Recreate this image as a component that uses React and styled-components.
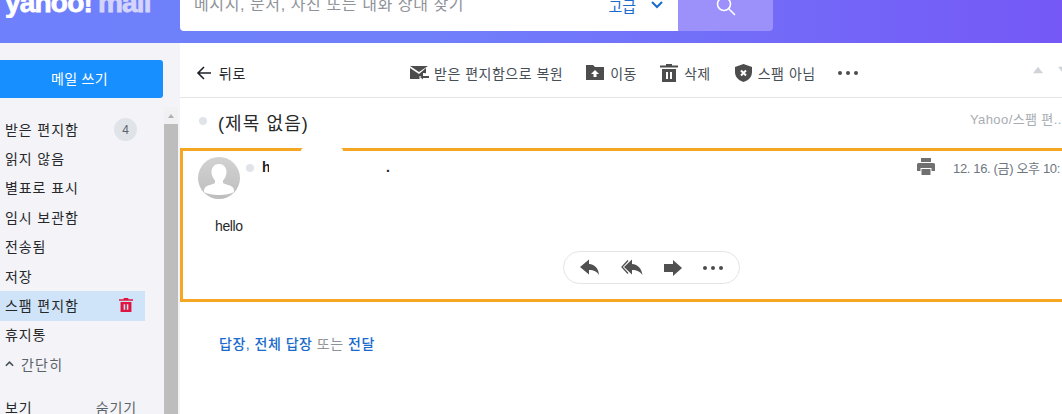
import styled, { createGlobalStyle } from 'styled-components';

const Global = createGlobalStyle`
  html, body { margin: 0; padding: 0; background: #fff; overflow: hidden; }
  body { font-family: "Liberation Sans", "Noto Sans CJK KR", sans-serif; }
`;

const Page = styled.div`
  width: 1062px;
  height: 414px;
  overflow: hidden;
  display: flex;
  flex-direction: column;
`;

const Header = styled.header`
  flex: 0 0 43px;
  height: 43px;
  display: flex;
  align-items: flex-start;
  background: linear-gradient(90deg, #6f80fc 0%, #7080fb 40%, #7558f6 100%);
`;

const Logo = styled.div`
  width: 180px;
  height: 18px;
  overflow: hidden;
  display: flex;
  align-items: flex-end;
  padding: 0 0 5px 5px;
  box-sizing: border-box;
  font-weight: 700;
  font-size: 28px;
  line-height: 20px;
  letter-spacing: -0.8px;
  -webkit-text-stroke: 0.8px currentColor;
  color: #fff;
  white-space: nowrap;
  span { color: #d5d5fb; margin-left: 6px; }
`;

const Search = styled.div`
  width: 498px;
  height: 31px;
  background: #fff;
  border-radius: 0 0 0 4px;
  display: flex;
  align-items: flex-end;
  justify-content: space-between;
  padding: 0 14px 0 14px;
  box-sizing: border-box;
  overflow: hidden;
`;

const SearchText = styled.div`
  font-size: 16px;
  line-height: 20px;
  height: 20px;
  margin-bottom: 16px;
  letter-spacing: 0.6px;
  color: #8f9399;
  white-space: nowrap;
`;

const Advanced = styled.div`
  display: flex;
  align-items: center;
  gap: 14px;
  height: 20px;
  margin-bottom: 16px;
  font-size: 15px;
  color: #1a6bcc;
`;

const SearchButton = styled.div`
  width: 95px;
  height: 31px;
  background: #9c90fb;
  border-radius: 0 0 4px 0;
  display: flex;
  justify-content: center;
  align-items: flex-end;
  padding-bottom: 14px;
  box-sizing: border-box;
  overflow: hidden;
`;

const Body = styled.div`
  flex: 1;
  display: flex;
  min-height: 0;
`;

const Sidebar = styled.aside`
  flex: 0 0 180px;
  display: flex;
  background: #f3f3f8;
  overflow: hidden;
`;

const Nav = styled.nav`
  width: 164px;
  flex: none;
  padding-top: 17px;
  box-sizing: border-box;
`;

const Compose = styled.div`
  width: 163px;
  height: 38px;
  padding: 0 4px 2px 0;
  box-sizing: border-box;
  background: #188fff;
  border-radius: 0 3px 3px 0;
  color: #fff;
  font-size: 14px;
  letter-spacing: 0.3px;
  display: flex;
  align-items: center;
  justify-content: center;
  margin-bottom: 17px;
`;

const Folder = styled.div`
  width: 145px;
  height: 29.4px;
  padding: 0 ${(p) => (p.$active ? 12 : 8)}px 2px 5px;
  box-sizing: border-box;
  display: flex;
  align-items: center;
  justify-content: space-between;
  font-size: 14px;
  letter-spacing: 0.9px;
  color: ${(p) => (p.$muted ? '#5b636a' : '#26282a')};
  background: ${(p) => (p.$active ? '#cfe4f9' : 'transparent')};
  white-space: nowrap;
`;

const Badge = styled.span`
  width: 23px;
  height: 23px;
  margin-top: 2px;
  border-radius: 50%;
  background: #e0e4e9;
  color: #5b636a;
  font-size: 12px;
  letter-spacing: 0;
  display: flex;
  align-items: center;
  justify-content: center;
`;

const Collapse = styled.span`
  display: flex;
  align-items: center;
  gap: 7px;
  letter-spacing: 1.2px;
`;

const ViewRow = styled(Folder)`
  margin-top: 14px;
`;

const ViewHide = styled.span`
  color: #5b636a;
`;

const Scrollbar = styled.div`
  flex: 0 0 14px;
  display: flex;
  flex-direction: column;
  align-items: center;
`;

const ScrollUp = styled.div`
  flex: 0 0 17px;
  width: 100%;
  margin-top: 64px;
  display: flex;
  justify-content: center;
  align-items: center;
  background: #f1f1f4;
`;

const ScrollThumb = styled.div`
  flex: 1;
  width: 100%;
  background: #bdbdbd;
`;

const Main = styled.main`
  flex: 1;
  min-width: 0;
  display: flex;
  flex-direction: column;
  overflow: hidden;
`;

const Toolbar = styled.div`
  flex: 0 0 55px;
  box-sizing: border-box;
  border-bottom: 1px solid #e5e5e5;
  display: flex;
  align-items: center;
  padding: 5px 0 0 16px;
  font-size: 14px;
  letter-spacing: 0.5px;
  color: #464e56;
  white-space: nowrap;
`;

const BackButton = styled.div`
  flex: none;
  display: flex;
  align-items: center;
  gap: 7px;
  width: 214px;
  color: #26282a;
`;

const ToolAction = styled.div`
  flex: none;
  display: flex;
  align-items: center;
  gap: ${(p) => p.$gap || 6}px;
  margin-right: ${(p) => p.$after || 23}px;
`;

const Pager = styled.div`
  flex: none;
  display: flex;
  gap: 15px;
  margin-left: 175px;
  margin-top: -5px;
`;

const Dots = styled.div`
  flex: none;
  display: flex;
  gap: 4px;
  span {
    width: 4px;
    height: 4px;
    border-radius: 50%;
    background: #4d4d4d;
  }
`;

const SubjectRow = styled.div`
  flex: 0 0 50px;
  display: flex;
  align-items: center;
  padding: 0 0 0 19px;
  white-space: nowrap;
`;

const UnreadDot = styled.span`
  width: 8px;
  height: 8px;
  border-radius: 50%;
  background: #e0e4e9;
  flex: none;
`;

const SubjectDot = styled(UnreadDot)`
  margin-bottom: 5px;
`;

const Subject = styled.h1`
  margin: -2px 0 0 11px;
  font-size: 18px;
  font-weight: 400;
  letter-spacing: 1.1px;
  color: #26282a;
  width: 752px;
  flex: none;
`;

const Crumb = styled.span`
  margin-bottom: 10px;
  font-size: 13px;
  letter-spacing: 0.4px;
  color: #a8adb2;
`;

const Card = styled.section`
  position: relative;
  flex: none;
  width: 900px;
  height: 154px;
  box-sizing: border-box;
  border: 3px solid #f5a623;
  border-right: 0;
  padding: 6px 0 0 15px;
`;

const Redaction = styled.span`
  position: absolute;
  left: 118px;
  top: -3px;
  width: 42px;
  height: 3px;
  background: #fff;
  border-radius: 3px 3px 0 0;
`;

const CardHead = styled.div`
  display: flex;
  align-items: flex-start;
`;

const Avatar = styled.div`
  width: 42px;
  height: 42px;
  border-radius: 50%;
  overflow: hidden;
  flex: none;
`;

const SenderDot = styled(UnreadDot)`
  margin: 7px 0 0 6px;
`;

const Sender = styled.div`
  display: flex;
  width: 128px;
  height: 16px;
  margin: 2px 0 0 8px;
  justify-content: space-between;
  font-size: 14px;
  font-weight: 700;
  line-height: 16px;
  color: #1d2228;
`;

const SenderClip = styled.span`
  width: 7px;
  overflow: hidden;
  height: 13px;
`;

const PrintSlot = styled.div`
  margin: 1px 0 0 527px;
  flex: none;
`;

const DateText = styled.div`
  margin: 1px 0 0 18px;
  font-size: 13px;
  letter-spacing: -0.35px;
  color: #6e7780;
  white-space: nowrap;
`;

const Message = styled.p`
  margin: 17px 0 0 17px;
  font-size: 14px;
  line-height: 20px;
  letter-spacing: -0.4px;
  color: #26282a;
`;

const ReplyPill = styled.div`
  width: 177px;
  height: 33px;
  margin: 15px 0 0 365px;
  box-sizing: border-box;
  border: 1px solid #e2e4e6;
  border-radius: 17px;
  display: flex;
  align-items: center;
  justify-content: space-between;
  padding: 0 16px;
`;

const QuickReply = styled.div`
  margin: 31px 0 0 39px;
  font-size: 14px;
  font-weight: 500;
  letter-spacing: 0.5px;
  color: #1a6bcc;
  em { font-style: normal; font-weight: 400; color: #8f9399; }
`;

const Chevron = ({ size = 14, color = '#1a6bcc' }) => (
  <svg width={size} height={size} viewBox="0 0 14 14"><path d="M2 4l5 5 5-5" fill="none" stroke={color} strokeWidth="2" /></svg>
);

const SearchIcon = () => (
  <svg width="22" height="22" viewBox="0 0 22 22" fill="none" stroke="#fff" strokeWidth="1.6">
    <circle cx="9" cy="9" r="6.5" /><path d="M14 14l6 6" />
  </svg>
);

const BackArrow = () => (
  <svg width="16" height="14" viewBox="0 0 16 14" fill="none" stroke="#1d2228" strokeWidth="1.6">
    <path d="M15 7H2M8 1L2 7l6 6" />
  </svg>
);

const RestoreMail = () => (
  <svg width="20" height="16" viewBox="0 0 20 16" fill="#4d4d4d">
    <path d="M0 1h18L9 7z" /><path d="M0 3v11h9.500V11H13V8l3 .2V3L9 9z" />
    <path d="M13 9.500l-3 2.500 3 2.500v-1.500h6V11h-6z" />
  </svg>
);

const MoveIcon = () => (
  <svg width="18" height="15" viewBox="0 0 18 15">
    <path fill="#4d4d4d" d="M0 0h7l2 2h9v13H0z" />
    <path fill="#fff" d="M9 5l4 4h-2.500v3h-3V9H5z" />
  </svg>
);

const Trash = ({ color = '#4d4d4d', size = 18 }) => (
  <svg width={size} height={size} viewBox="0 0 18 18" fill={color}>
    <path d="M6 0h6v1.500h6v2H0v-2h6z" />
    <path fillRule="evenodd" d="M2 5h14v13H2zM6 8v7h2V8zM10 8v7h2V8z" />
  </svg>
);

const Shield = () => (
  <svg width="17" height="18" viewBox="0 0 17 18">
    <path fill="#4d4d4d" d="M8.500 0L17 3v5c0 5-3.500 8.500-8.500 10C3.500 16.500 0 13 0 8V3z" />
    <path stroke="#fff" strokeWidth="2" d="M6 6.500l5 5M11 6.500l-5 5" />
  </svg>
);

const Tri = ({ up, w = 12, h = 8, color = '#d0d4d9' }) => (
  <svg width={w} height={h} viewBox="0 0 12 8"><path fill={color} d={up ? 'M6 0l6 8H0z' : 'M0 0h12L6 8z'} /></svg>
);

const AvatarIcon = () => (
  <svg width="42" height="42" viewBox="0 0 42 42">
    <defs>
      <linearGradient id="av" x1="0" y1="0" x2="0" y2="1">
        <stop offset="0" stopColor="#d2d2d2" /><stop offset="1" stopColor="#bdbdbd" />
      </linearGradient>
    </defs>
    <rect width="42" height="42" fill="url(#av)" />
    <path fill="#fff" d="M21 7c4.500 0 7.500 3.500 7.500 8 0 3.500-1.500 6.500-3.500 8.500v2.500c2 1.500 8 2 10 4.500 1 1.500 1 3 1 4.500 -3 2-9 3-15 3s-12-1-15-3c0-1.500 0-3 1-4.500 2-2.500 8-3 10-4.500v-2.500c-2-2-3.500-5-3.500-8.500 0-4.500 3-8 7.500-8z" />
  </svg>
);

const PrintIcon = () => (
  <svg width="18" height="17" viewBox="0 0 18 17" fill="#707070">
    <path d="M4 0h10v4H4z" />
    <path fillRule="evenodd" d="M1.500 5h15A1.500 1.500 0 0118 6.500V13h-3.500v-3h-11v3H0V6.500A1.500 1.500 0 011.500 5z" />
    <path d="M4.500 11h9v6h-9z" />
  </svg>
);

const ReplyIcon = () => (
  <svg width="20" height="17" viewBox="0 0 20 16" fill="#505050">
    <path d="M9 0v4.500c6 .5 9.500 4.500 10 11 -2-3.500-5-5-10-5V15L0 7.500z" />
  </svg>
);

const ReplyAllIcon = () => (
  <svg width="22" height="17" viewBox="0 0 22 16">
    <path fill="#505050" d="M11 0v4.500c6 .5 9.500 4.500 10.500 11 -2.500-3.500-5.500-5-10.500-5V15L3 7.500z" />
    <path fill="none" stroke="#505050" strokeWidth="1.300" d="M7 1L1 7.500 7 14" />
  </svg>
);

const ForwardIcon = () => (
  <svg width="18" height="16" viewBox="0 0 18 16" fill="#505050">
    <path d="M0 4h9V0l9 8-9 8v-4H0z" />
  </svg>
);

const MoreDots = () => (
  <Dots><span /><span /><span /></Dots>
);

const folders = ['읽지 않음', '별표로 표시', '임시 보관함', '전송됨', '저장'];

export default function App() {
  return (
    <Page>
      <Global />
      <Header>
        <Logo>yahoo!<span>mail</span></Logo>
        <Search>
          <SearchText>메시지, 문서, 사진 또는 내화 상대 찾기</SearchText>
          <Advanced>고급 <Chevron /></Advanced>
        </Search>
        <SearchButton><SearchIcon /></SearchButton>
      </Header>
      <Body>
        <Sidebar>
          <Nav>
            <Compose>메일 쓰기</Compose>
            <Folder>받은 편지함<Badge>4</Badge></Folder>
            {folders.map((name) => <Folder key={name}>{name}</Folder>)}
            <Folder $active>스팸 편지함<Trash color="#e0153f" size={14} /></Folder>
            <Folder>휴지통</Folder>
            <Folder $muted>
              <Collapse>
                <svg width="9" height="8" viewBox="0 0 10 8"><path d="M1 6l4-4 4 4" fill="none" stroke="#464e56" strokeWidth="1.800" /></svg>
                간단히
              </Collapse>
            </Folder>
            <ViewRow>보기<ViewHide>숨기기</ViewHide></ViewRow>
          </Nav>
          <Scrollbar>
            <ScrollUp><Tri up w={8} h={4} color="#b0b0b0" /></ScrollUp>
            <ScrollThumb />
          </Scrollbar>
        </Sidebar>
        <Main>
          <Toolbar>
            <BackButton><BackArrow />뒤로</BackButton>
            <ToolAction $gap={4}><RestoreMail />받은 편지함으로 복원</ToolAction>
            <ToolAction><MoveIcon />이동</ToolAction>
            <ToolAction $after={24}><Trash />삭제</ToolAction>
            <ToolAction $after={22}><Shield />스팸 아님</ToolAction>
            <MoreDots />
            <Pager><Tri up w={10} /><Tri w={10} /></Pager>
          </Toolbar>
          <SubjectRow>
            <SubjectDot />
            <Subject>(제목 없음)</Subject>
            <Crumb>Yahoo/스팸 편...</Crumb>
          </SubjectRow>
          <Card>
            <Redaction />
            <CardHead>
              <Avatar><AvatarIcon /></Avatar>
              <SenderDot />
              <Sender><SenderClip>h</SenderClip><span>.</span></Sender>
              <PrintSlot><PrintIcon /></PrintSlot>
              <DateText>12. 16. (금) 오후 10:</DateText>
            </CardHead>
            <Message>hello</Message>
            <ReplyPill>
              <ReplyIcon />
              <ReplyAllIcon />
              <ForwardIcon />
              <MoreDots />
            </ReplyPill>
          </Card>
          <QuickReply>답장, 전체 답장 <em>또는</em> 전달</QuickReply>
        </Main>
      </Body>
    </Page>
  );
}
